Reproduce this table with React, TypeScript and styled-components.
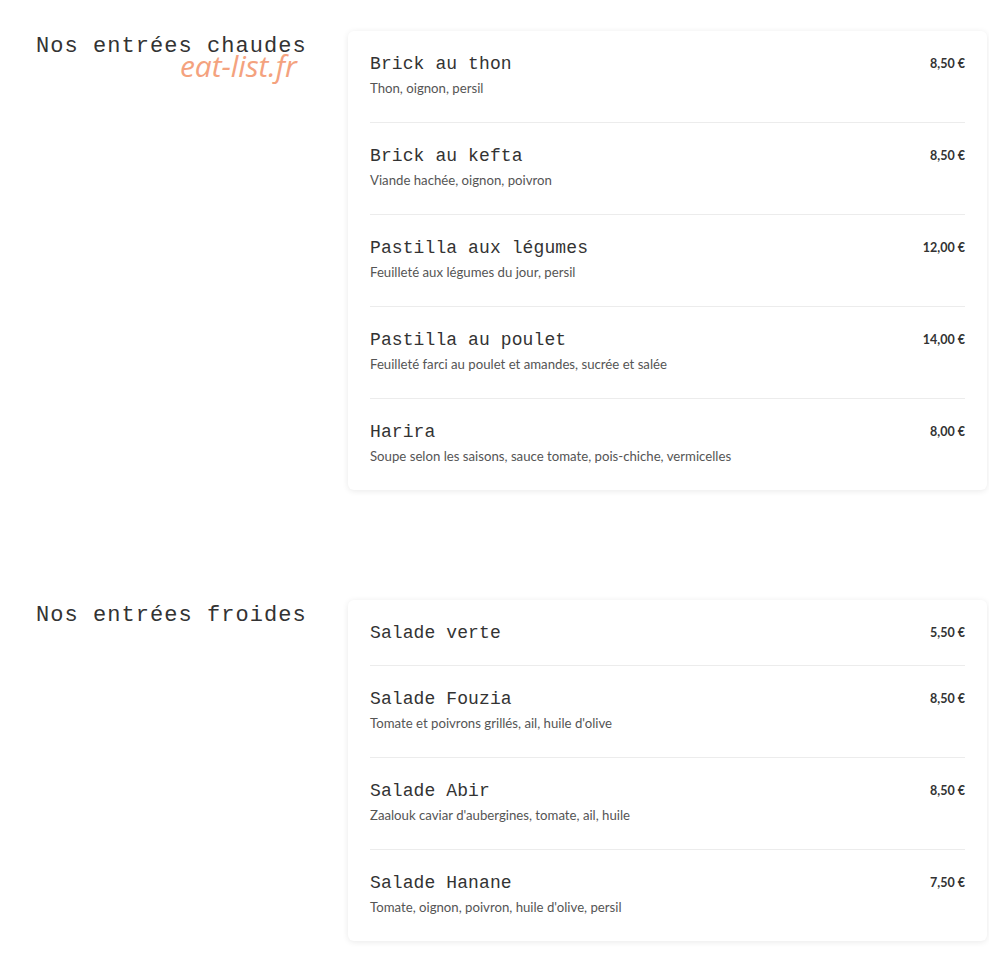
import React from 'react';
import styled, { createGlobalStyle } from 'styled-components';

type Dish = { name: string; desc?: string; price: string };

const hotStarters: Dish[] = [
  { name: 'Brick au thon', desc: 'Thon, oignon, persil', price: '8,50 €' },
  { name: 'Brick au kefta', desc: 'Viande hachée, oignon, poivron', price: '8,50 €' },
  { name: 'Pastilla aux légumes', desc: 'Feuilleté aux légumes du jour, persil', price: '12,00 €' },
  { name: 'Pastilla au poulet', desc: 'Feuilleté farci au poulet et amandes, sucrée et salée', price: '14,00 €' },
  { name: 'Harira', desc: 'Soupe selon les saisons, sauce tomate, pois-chiche, vermicelles', price: '8,00 €' },
];

const coldStarters: Dish[] = [
  { name: 'Salade verte', price: '5,50 €' },
  { name: 'Salade Fouzia', desc: "Tomate et poivrons grillés, ail, huile d'olive", price: '8,50 €' },
  { name: 'Salade Abir', desc: "Zaalouk caviar d'aubergines, tomate, ail, huile", price: '8,50 €' },
  { name: 'Salade Hanane', desc: "Tomate, oignon, poivron, huile d'olive, persil", price: '7,50 €' },
];

const GlobalStyle = createGlobalStyle`
  html, body {
    margin: 0;
    background: #ffffff;
  }
`;

const App: React.FC = () => {
  return (
    <Page>
      <GlobalStyle />
      <Section>
        <HeadingBox>
          <Heading>Nos entrées chaudes</Heading>
          <Watermark>eat-list.fr</Watermark>
        </HeadingBox>
        <Card>
          {hotStarters.map(d => <DishRow key={d.name} dish={d} />)}
        </Card>
      </Section>
      <Section>
        <HeadingBox>
          <Heading>Nos entrées froides</Heading>
        </HeadingBox>
        <Card>
          {coldStarters.map(d => <DishRow key={d.name} dish={d} />)}
        </Card>
      </Section>
    </Page>
  );
};

const DishRow: React.FC<{ dish: Dish }> = ({ dish }) => (
  <Item>
    <ItemText>
      <ItemName>{dish.name}</ItemName>
      {dish.desc && <ItemDesc>{dish.desc}</ItemDesc>}
    </ItemText>
    <Price>{dish.price}</Price>
  </Item>
);

const Page = styled.div`
display: flex;
flex-direction: column;
gap: 110px;
padding: 31px 2px 30px 36px;
`;

const Section = styled.section`
display: grid;
grid-template-columns: 312px 1fr;
align-items: start;
`;

const HeadingBox = styled.div`
position: relative;
padding-top: 3px;
`;

const Heading = styled.h2`
margin: 0;
font-family: 'Liberation Mono', 'DejaVu Sans Mono', monospace;
font-weight: 400;
font-size: 22px;
letter-spacing: 1.05px;
line-height: 26px;
color: #333333;
`;

const Watermark = styled.span`
position: absolute;
left: 144px;
top: 15px;
font-family: 'Open Sans', sans-serif;
font-style: italic;
font-size: 30px;
line-height: 40px;
color: #f4a27e;
letter-spacing: -0.1px;
`;

const Card = styled.div`
background: #ffffff;
border-radius: 6px;
box-shadow: 0 1px 6px rgba(0, 0, 0, 0.09);
padding: 0 22px;
`;

const Item = styled.div`
display: flex;
justify-content: space-between;
align-items: flex-start;
padding: 22px 0 21px;
& + & {
  border-top: 1px solid #ececec;
}
`;

const ItemText = styled.div`
display: flex;
flex-direction: column;
`;

const ItemName = styled.div`
font-family: 'Liberation Mono', 'DejaVu Sans Mono', monospace;
font-size: 18px;
letter-spacing: 0.1px;
line-height: 22px;
color: #333333;
`;

const ItemDesc = styled.div`
margin: 4px 0 4px;
font-family: 'Lato', sans-serif;
font-size: 13.2px;
line-height: 18px;
color: #555555;
`;

const Price = styled.div`
font-family: 'Lato', sans-serif;
font-weight: 700;
font-size: 12.5px;
line-height: 22px;
color: #333333;
white-space: nowrap;
`;

export default App;
